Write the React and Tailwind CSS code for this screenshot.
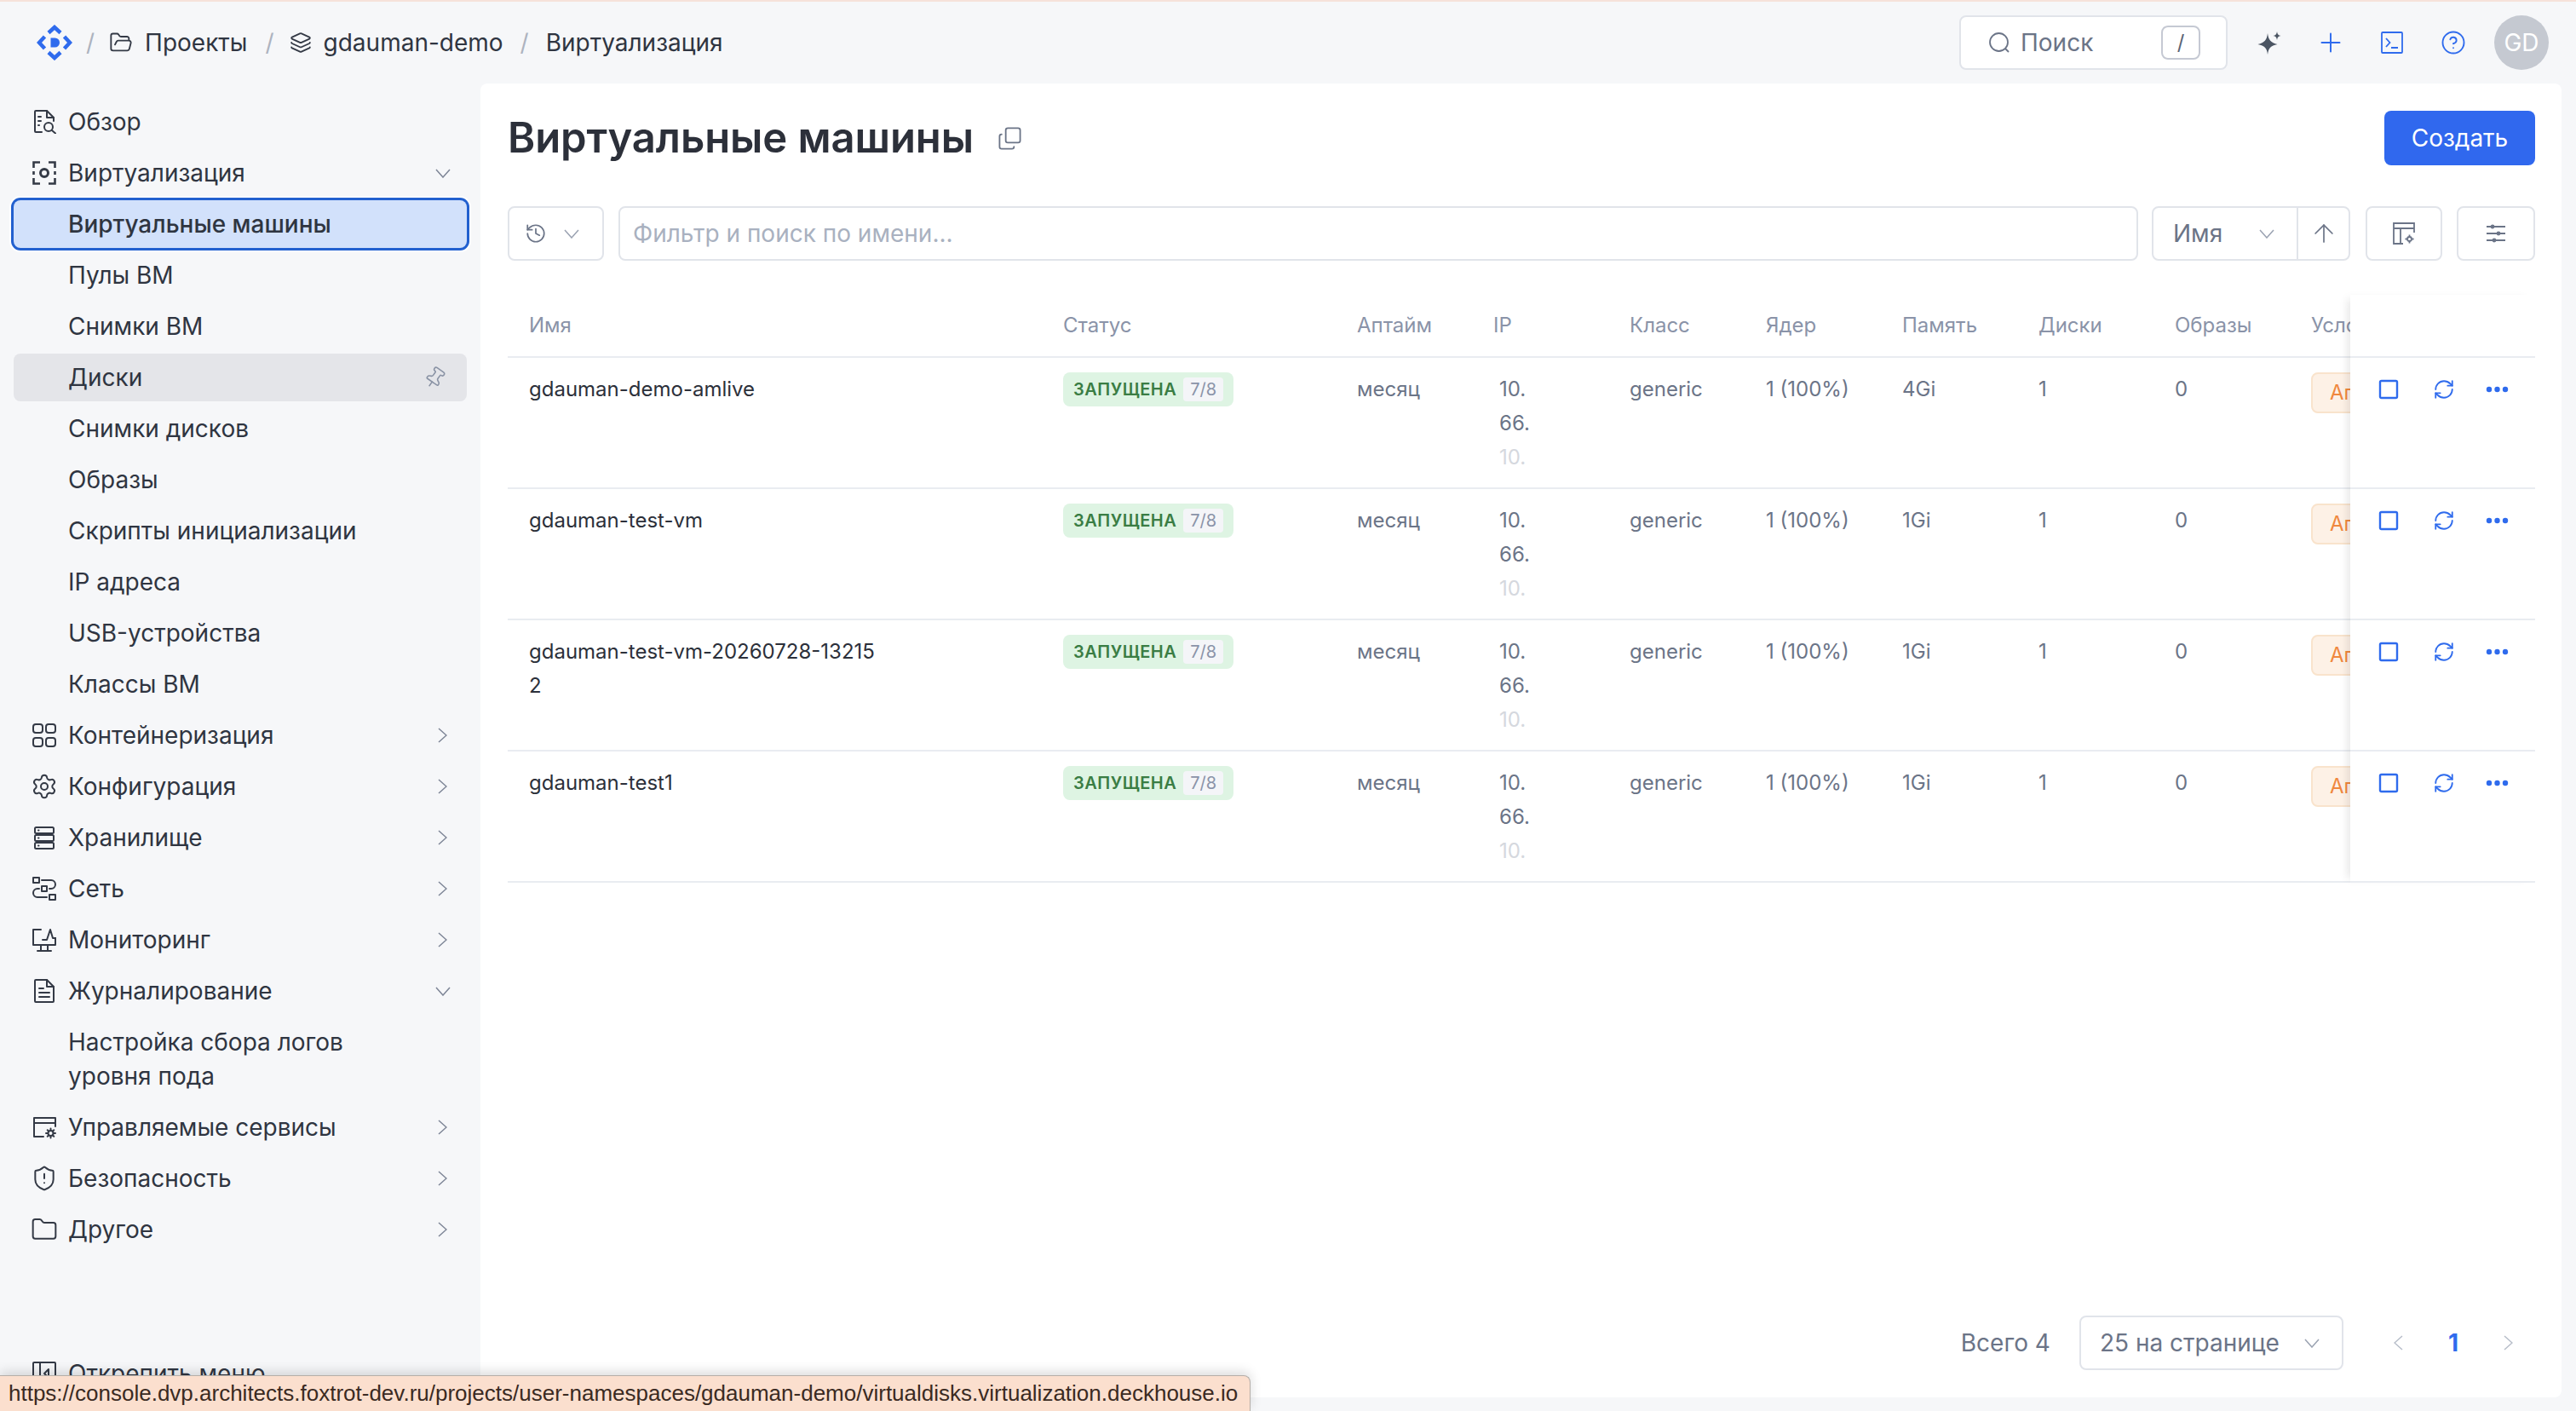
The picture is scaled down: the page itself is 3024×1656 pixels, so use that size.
import React from 'react';
import { Settings, ShieldAlert, Folder, FolderOpen, Layers, Pin, CircleHelp, History, Copy, ArrowUp, RefreshCw, Plus } from 'lucide-react';

const Svg = ({ size = 28, children, className = '', strokeWidth = 2 }) => (
  <svg width={size} height={size} viewBox="0 0 28 28" fill="none" stroke="currentColor" strokeWidth={strokeWidth} strokeLinecap="round" strokeLinejoin="round" className={`shrink-0 ${className}`}>
    {children}
  </svg>
);

const DocSearch = () => (
  <Svg>
    <path d="M11 26H4a1 1 0 0 1-1-1V2a1 1 0 0 1 1-1h13l8 8v4" />
    <path d="M17 1v8h8" />
    <path d="M7 8h3M7 13h3M7 18h1" />
    <circle cx="19" cy="20" r="5" />
    <path d="M23 24l4 3.5" />
  </Svg>
);

const VirtIcon = () => (
  <Svg strokeWidth={2.6}>
    <g strokeLinecap="butt" strokeLinejoin="miter">
      <path d="M1.5 8V1.5H9M19 1.5h7.5V8M26.500 20v6.500H19M9 26.500H1.500V20M1.500 12v4M26.500 12v4" />
      <circle cx="14" cy="14" r="4.500" strokeWidth="3" />
    </g>
  </Svg>
);

const GridIcon = () => (
  <Svg>
    <rect x="1" y="1" width="11" height="10" rx="3" />
    <rect x="16" y="1" width="11" height="10" rx="3" />
    <rect x="1" y="17" width="11" height="10" rx="3" />
    <rect x="16" y="17" width="11" height="10" rx="3" />
  </Svg>
);

const StorageIcon = () => (
  <Svg>
    <rect x="3" y="2" width="22" height="7" rx="1.500" />
    <rect x="3" y="11" width="22" height="7" rx="1.500" />
    <rect x="3" y="20" width="22" height="7" rx="1.500" />
    <path d="M7 5.500h.5M7 14.500h.5M7 23.500h.5" />
  </Svg>
);

const NetworkIcon = () => (
  <Svg>
    <rect x="1" y="1" width="7" height="6" />
    <rect x="11" y="11" width="6" height="6" />
    <rect x="20" y="21" width="7" height="6" />
    <path d="M11 4h11a5 5 0 0 1 0 10h-2M8 14H6a5 5 0 0 0 0 10h11" />
  </Svg>
);

const MonitorIcon = () => (
  <Svg>
    <path d="M10 2H1v18h26v-8" />
    <path d="M12 14h5l4-12 3 10h4" />
    <path d="M10 20v7M18 20v7M6 27h16" />
  </Svg>
);

const LogIcon = () => (
  <Svg>
    <path d="M17 1H4a1 1 0 0 0-1 1v24a1 1 0 0 0 1 1h20a1 1 0 0 0 1-1V9z" />
    <path d="M17 1v8h8M8 11h5M8 16h12M8 21h12" />
  </Svg>
);

const ServicesIcon = ({ size = 28 }) => (
  <Svg size={size}>
    <path d="M13 25H2V3h25v10M2 9h25" />
    <circle cx="21.500" cy="21" r="3" />
    <path d="M21.500 15.500v2M21.500 24.500v2M16 21h2M25 21h2M17.700 17.200l1.300 1.300M24 23.500l1.300 1.300M25.300 17.200L24 18.500M19 23.500l-1.300 1.300" />
  </Svg>
);

const UnpinIcon = () => (
  <Svg>
    <rect x="1" y="1" width="26" height="26" rx="1" />
    <path d="M9 1v26M19 9l-5 5 5 5z" />
  </Svg>
);

const Logo = () => (
  <svg width="42" height="42" viewBox="0 0 42 42" className="shrink-0">
    <g fill="none" stroke="#2f6bed" strokeWidth="4.500">
      <path d="M14 9.500l7-6.500 7 6.500M14 32.500l7 6.500 7-6.500M9.500 14L3 21l6.500 7M32.500 14l6.500 7-6.500 7" />
    </g>
    <path d="M16.500 15.500h5a5.500 5.500 0 0 1 0 11h-5z" fill="#2f6bed" />
  </svg>
);

const Chevron = ({ dir = 'right', className = 'text-[#7d8596]' }) => {
  if (dir === 'down') {
    return (
      <svg width="18" height="11" viewBox="0 0 18 11" fill="none" stroke="currentColor" strokeWidth="1.500" className={`shrink-0 ${className}`}>
        <path d="M1 1l8 9 8-9" />
      </svg>
    );
  }
  return (
    <svg width="11" height="18" viewBox="0 0 11 18" fill="none" stroke="currentColor" strokeWidth="1.500" className={`shrink-0 ${className}`}>
      {dir === 'right' ? <path d="M1 1l9 8-9 8" /> : <path d="M10 1L1 9l9 8" />}
    </svg>
  );
};

const NavItem = ({ icon, label, chevron, active, hover, tall }) => (
  <div
    className={`flex items-center pl-[22px] pr-[19px] rounded-lg ${tall ? 'h-[96px]' : 'h-[56px]'} ${active ? 'bg-[#d2e1fb] shadow-[0_0_0_3px_#2260cf,0_0_0_5px_#ffffff]' : ''} ${hover ? 'bg-[#e4e5e9]' : ''}`}
  >
    <div className="flex items-center justify-center w-[28px] h-[28px] mr-[14px] shrink-0 text-[#343a46]">{icon}</div>
    <span className={`flex-1 text-[28px] leading-[40px] text-[#2f3541] ${active ? 'font-medium' : ''}`}>{label}</span>
    {chevron === 'down' && <Chevron dir="down" />}
    {chevron === 'right' && <Chevron dir="right" className="mr-[4px] text-[#7d8596]" />}
    {hover && <Pin size={27} strokeWidth={1.400} className="rotate-[35deg] text-[#8a93a5] mr-[5px]" />}
  </div>
);

const navTop = [
  { icon: <DocSearch />, label: 'Обзор' },
  { icon: <VirtIcon />, label: 'Виртуализация', chevron: 'down' },
  { label: 'Виртуальные машины', active: true },
  { label: 'Пулы ВМ' },
  { label: 'Снимки ВМ' },
  { label: 'Диски', hover: true },
  { label: 'Снимки дисков' },
  { label: 'Образы' },
  { label: 'Скрипты инициализации' },
  { label: 'IP адреса' },
  { label: 'USB-устройства' },
  { label: 'Классы ВМ' },
  { icon: <GridIcon />, label: 'Контейнеризация', chevron: 'right' },
  { icon: <Settings size={32} strokeWidth={1.500} className="shrink-0" />, label: 'Конфигурация', chevron: 'right' },
  { icon: <StorageIcon />, label: 'Хранилище', chevron: 'right' },
  { icon: <NetworkIcon />, label: 'Сеть', chevron: 'right' },
  { icon: <MonitorIcon />, label: 'Мониторинг', chevron: 'right' },
  { icon: <LogIcon />, label: 'Журналирование', chevron: 'down' },
  { label: <>Настройка сбора логов<br />уровня пода</>, tall: true },
  { icon: <ServicesIcon />, label: 'Управляемые сервисы', chevron: 'right' },
  { icon: <ShieldAlert size={32} strokeWidth={1.500} className="shrink-0" />, label: 'Безопасность', chevron: 'right' },
  { icon: <Folder size={32} strokeWidth={1.500} className="shrink-0" />, label: 'Другое', chevron: 'right' },
];

const columns = ['Имя', 'Статус', 'Аптайм', 'IP', 'Класс', 'Ядер', 'Память', 'Диски', 'Образы', 'Условия'];

const vms = [
  { name: 'gdauman-demo-amlive', mem: '4Gi' },
  { name: 'gdauman-test-vm', mem: '1Gi' },
  { name: 'gdauman-test-vm-20260728-132152', mem: '1Gi' },
  { name: 'gdauman-test1', mem: '1Gi' },
];

const gridCols = 'grid grid-cols-[627px_345px_160px_160px_160px_160px_160px_160px_160px_160px]';

const Cell = ({ children }) => (
  <div className="pl-[25px] pt-[17px] text-[24px] leading-[40px] text-[#6b7487] overflow-hidden">{children}</div>
);

const VmRow = ({ vm }) => (
  <div className={`${gridCols} h-[154px] border-b-2 border-[#e9ecf1]`}>
    <div className="pl-[25px] pt-[17px] text-[24px] leading-[40px] text-[#2c303a]">
      <div className="w-[420px] break-all">{vm.name}</div>
    </div>
    <div className="pl-[25px] pt-[17px]">
      <div className="inline-flex items-center h-[40px] pl-[12px] pr-[12px] rounded-lg bg-[#def4e3]">
        <span className="text-[20px] font-semibold tracking-[0.5px] text-[#3a7d44] mr-[8px]">ЗАПУЩЕНА</span>
        <span className="flex items-center h-[28px] px-[8px] rounded bg-[#f4f5f8] text-[20px] text-[#8a93a8]">7/8</span>
      </div>
    </div>
    <Cell>месяц</Cell>
    <Cell>
      <div className="pl-[7px]">10.</div>
      <div className="pl-[7px]">66.</div>
      <div className="pl-[7px] text-[#d5d8de]">10.</div>
    </Cell>
    <Cell>generic</Cell>
    <Cell>1 (100%)</Cell>
    <Cell>{vm.mem}</Cell>
    <Cell>1</Cell>
    <Cell>0</Cell>
    <div className="pl-[25px] pt-[17px]">
      <div className="flex items-center h-[48px] pl-[20px] w-[200px] rounded-lg border-2 border-[#f9e3cc] bg-[#fdf1e6] text-[24px] text-[#f0883e] whitespace-nowrap">
        Агент готов
      </div>
    </div>
  </div>
);

const ActionRow = () => (
  <div className="flex items-start h-[154px] border-b-2 border-[#e9ecf1] pt-[25px] pl-[33px] text-[#2f6bed]">
    <svg width="24" height="24" viewBox="0 0 24 24" fill="none" stroke="currentColor" strokeWidth="2.400" className="shrink-0">
      <rect x="2" y="2" width="20" height="20" rx="1.500" />
    </svg>
    <RefreshCw size={26} strokeWidth={1.700} className="shrink-0 ml-[40px] -mt-[1px]" />
    <svg width="28" height="24" viewBox="0 0 28 24" fill="currentColor" className="shrink-0 ml-[36px]">
      <circle cx="4" cy="12" r="3.200" />
      <circle cx="13.500" cy="12" r="3.200" />
      <circle cx="23" cy="12" r="3.200" />
    </svg>
  </div>
);

export default function App() {
  return (
    <div className="relative w-[3024px] h-[1656px] overflow-hidden flex flex-col bg-[#f6f7f9] font-[Inter,sans-serif]">
      <div className="h-[2px] shrink-0 bg-[#f6e2da]" />

      <header className="h-[96px] shrink-0 flex items-center pl-[43px] pr-[32px] text-[28px] text-[#2f3541]">
        <Logo />
        <span className="ml-[16px] text-[#adb3bf]">/</span>
        <FolderOpen size={28} strokeWidth={1.600} className="ml-[17px] text-[#343a46]" />
        <span className="ml-[14px]">Проекты</span>
        <span className="ml-[21px] text-[#adb3bf]">/</span>
        <Layers size={26} strokeWidth={1.700} className="ml-[18px] text-[#343a46]" />
        <span className="ml-[14px]">gdauman-demo</span>
        <span className="ml-[20px] text-[#adb3bf]">/</span>
        <span className="ml-[20px]">Виртуализация</span>

        <div className="ml-auto flex items-center w-[315px] h-[64px] pl-[32px] pr-[30px] rounded-lg border-2 border-[#e1e4ea] bg-white text-[#6b7487]">
          <svg width="26" height="26" viewBox="0 0 26 26" fill="none" stroke="currentColor" strokeWidth="1.800" className="shrink-0">
            <circle cx="12.500" cy="12.500" r="10.500" />
            <path d="M20 20l4 4" />
          </svg>
          <span className="ml-[12px]">Поиск</span>
          <span className="ml-auto flex items-center justify-center w-[46px] h-[40px] rounded-lg border-2 border-[#c5c9d3] text-[24px] text-[#5b6475]">/</span>
        </div>

        <div className="flex items-center ml-[35px] gap-[44px]">
          <svg width="28" height="28" viewBox="0 0 28 28" fill="#4b5563" className="shrink-0">
            <path d="M12 3c1 8 3.500 11 11.500 13C15.500 18 13 20 12 28 11 20 8.500 18 .5 16 8.500 14 11 11 12 3z" />
            <path d="M23 1c.4 3 1.500 4.500 4.500 5-3 .5-4.100 2-4.500 5-.4-3-1.500-4.500-4.500-5 3-.5 4.100-2 4.500-5z" />
          </svg>
          <Plus size={36} strokeWidth={1.300} className="shrink-0 -m-[4px] text-[#2f6bed]" />
          <svg width="28" height="28" viewBox="0 0 28 28" fill="none" stroke="#2f6bed" strokeWidth="1.800" className="shrink-0">
            <rect x="2" y="2" width="24" height="24" rx="1" />
            <path d="M7 9l4.500 5L7 19M13 20h8" />
          </svg>
          <CircleHelp size={30} strokeWidth={1.500} className="shrink-0 -m-[1px] text-[#2f6bed]" />
        </div>
        <div className="ml-[34px] flex items-center justify-center w-[64px] h-[64px] rounded-full bg-[#c5c9d1] text-white">GD</div>
      </header>

      <div className="flex-1 flex min-h-0">
        <aside className="w-[564px] shrink-0 flex flex-col pt-[17px] pl-[16px] pr-[16px] pb-[16px]">
          <nav className="flex flex-col gap-[4px]">
            {navTop.map((item, idx) => (
              <NavItem key={idx} {...item} />
            ))}
          </nav>
          <div className="mt-auto">
            <NavItem icon={<UnpinIcon />} label="Открепить меню" />
          </div>
        </aside>

        <main className="flex-1 flex flex-col min-w-0 mr-[17px] mb-[16px] rounded-lg bg-white pt-[32px] pl-[32px] pr-[31px] pb-[32px]">
          <div className="flex items-center h-[64px]">
            <h1 className="text-[49px] font-semibold tracking-[-0.1px] text-[#2c303a]">Виртуальные машины</h1>
            <Copy size={29} strokeWidth={1.500} className="ml-[28px] text-[#6b7487] -scale-y-100" />
            <button className="ml-auto w-[177px] h-[64px] rounded-lg bg-[#3068ee] text-white text-[28px]">Создать</button>
          </div>

          <div className="flex mt-[48px] h-[64px] text-[#6b7487] text-[28px]">
            <div className="flex items-center w-[113px] pl-[18px] rounded-lg border-2 border-[#e1e4ea]">
              <History size={26} strokeWidth={1.600} />
              <Chevron dir="down" className="ml-[20px] text-[#9aa2b1]" />
            </div>
            <div className="flex items-center flex-1 ml-[17px] pl-[15px] rounded-lg border-2 border-[#e1e4ea] text-[#a9b1c0]">Фильтр и поиск по имени...</div>
            <div className="flex items-center w-[233px] ml-[16px] rounded-lg border-2 border-[#e1e4ea]">
              <span className="ml-[23px]">Имя</span>
              <Chevron dir="down" className="ml-auto mr-[26px] text-[#9aa2b1]" />
              <div className="flex items-center justify-center w-[61px] h-full border-l-2 border-[#e1e4ea]">
                <ArrowUp size={34} strokeWidth={1.200} className="shrink-0" />
              </div>
            </div>
            <div className="flex items-center justify-center w-[90px] ml-[18px] rounded-lg border-2 border-[#e1e4ea]">
              <svg width="26" height="26" viewBox="0 0 26 26" fill="none" stroke="currentColor" strokeWidth="1.800" className="shrink-0">
                <path d="M12 25H1V1h24v11M1 7h24M9 7v18" />
                <circle cx="19.500" cy="19.500" r="2.500" />
                <path d="M19.500 14.500v2M19.500 22.500v2M14.500 19.500h2M22.500 19.500h2" />
              </svg>
            </div>
            <div className="flex items-center justify-center w-[92px] ml-[17px] rounded-lg border-2 border-[#e1e4ea]">
              <svg width="24" height="24" viewBox="0 0 24 24" fill="currentColor" stroke="currentColor" strokeWidth="1.800" className="shrink-0">
                <path d="M1 4h22M1 12h22M1 20h22" />
                <circle cx="8" cy="4" r="1.500" />
                <circle cx="15" cy="12" r="1.500" />
                <circle cx="10" cy="20" r="1.500" />
              </svg>
            </div>
          </div>

          <div className="flex mt-[40px]">
            <div className="flex-1 min-w-0 overflow-hidden">
              <div className={`${gridCols} h-[74px] items-center border-b-2 border-[#e9ecf1] text-[24px] text-[#8a93a8]`}>
                {columns.map((col) => (
                  <div key={col} className="pl-[25px] whitespace-nowrap">{col}</div>
                ))}
              </div>
              {vms.map((vm) => (
                <VmRow key={vm.name} vm={vm} />
              ))}
            </div>
            <div className="relative w-[217px] shrink-0 bg-white shadow-[-8px_0_10px_-5px_rgba(0,0,0,0.1)]">
              <div className="h-[74px] border-b-2 border-[#e9ecf1]" />
              {vms.map((vm) => (
                <ActionRow key={vm.name} />
              ))}
            </div>
          </div>

          <div className="mt-auto flex items-center justify-end h-[64px] text-[28px] text-[#6b7487]">
            <span>Всего 4</span>
            <div className="flex items-center w-[310px] h-full ml-[34px] pl-[22px] pr-[26px] rounded-lg border-2 border-[#e1e4ea]">
              <span>25 на странице</span>
              <Chevron dir="down" className="ml-auto text-[#9aa2b1]" />
            </div>
            <Chevron dir="left" className="ml-[59px] text-[#b7bdc9]" />
            <span className="ml-[53px] font-bold text-[#2f6bed]">1</span>
            <Chevron dir="right" className="ml-[53px] mr-[26px] text-[#b7bdc9]" />
          </div>
        </main>
      </div>

      <div className="absolute left-0 bottom-0 h-[42px] flex items-center pl-[10px] pr-[14px] rounded-tr-lg border-t border-r border-[#b5aea8] bg-[#fbdfce] shadow-[0_-4px_14px_rgba(0,0,0,0.14)] font-['Liberation_Sans',sans-serif] text-[26px] text-[#3a2a22] whitespace-nowrap">
        https://console.dvp.architects.foxtrot-dev.ru/projects/user-namespaces/gdauman-demo/virtualdisks.virtualization.deckhouse.io
      </div>
    </div>
  );
}
